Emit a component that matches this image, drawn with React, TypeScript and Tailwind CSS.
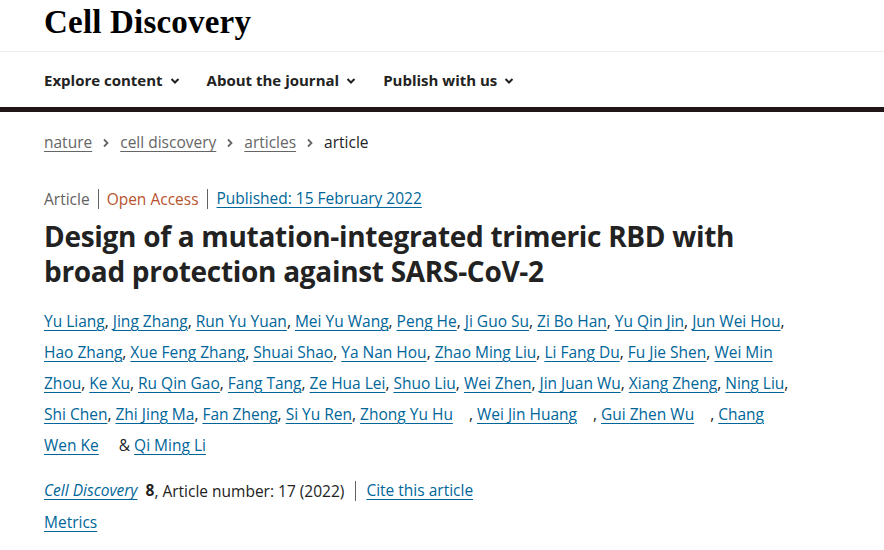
import React from "react";

const sans = { fontFamily: '"Open Sans", "Noto Sans", sans-serif' };

// parts: a name that wraps at the line end is split into two link pieces
type Author = { parts: string[]; gap?: boolean };

const authors: Author[] = [
  { parts: ["Yu Liang"] },
  { parts: ["Jing Zhang"] },
  { parts: ["Run Yu Yuan"] },
  { parts: ["Mei Yu Wang"] },
  { parts: ["Peng He"] },
  { parts: ["Ji Guo Su"] },
  { parts: ["Zi Bo Han"] },
  { parts: ["Yu Qin Jin"] },
  { parts: ["Jun Wei Hou"] },
  { parts: ["Hao Zhang"] },
  { parts: ["Xue Feng Zhang"] },
  { parts: ["Shuai Shao"] },
  { parts: ["Ya Nan Hou"] },
  { parts: ["Zhao Ming Liu"] },
  { parts: ["Li Fang Du"] },
  { parts: ["Fu Jie Shen"] },
  { parts: ["Wei Min", "Zhou"] },
  { parts: ["Ke Xu"] },
  { parts: ["Ru Qin Gao"] },
  { parts: ["Fang Tang"] },
  { parts: ["Ze Hua Lei"] },
  { parts: ["Shuo Liu"] },
  { parts: ["Wei Zhen"] },
  { parts: ["Jin Juan Wu"] },
  { parts: ["Xiang Zheng"] },
  { parts: ["Ning Liu"] },
  { parts: ["Shi Chen"] },
  { parts: ["Zhi Jing Ma"] },
  { parts: ["Fan Zheng"] },
  { parts: ["Si Yu Ren"] },
  { parts: ["Zhong Yu Hu"], gap: true },
  { parts: ["Wei Jin Huang"], gap: true },
  { parts: ["Gui Zhen Wu"], gap: true },
  { parts: ["Chang", "Wen Ke"], gap: true },
];

function Chevron() {
  return (
    <svg width="10" height="10" viewBox="0 0 10 10" className="ml-[7px] mt-[1px]">
      <path d="M1.5 3 L5 6.5 L8.5 3" fill="none" stroke="#222" strokeWidth="2" />
    </svg>
  );
}

function Crumb() {
  return (
    <svg width="8" height="10" viewBox="0 0 8 10" className="mx-[10px]">
      <path d="M2 1.5 L5.5 5 L2 8.5" fill="none" stroke="#666" strokeWidth="1.8" />
    </svg>
  );
}

const link = "text-[#006699] underline underline-offset-[3px]";

export default function App() {
  return (
    <div className="w-[884px] h-[550px] overflow-hidden bg-white text-[#222]" style={sans}>
      <header className="h-[52px] border-b border-[#eeeeee] px-[44px] flex items-center">
        <span
          className="text-[33px] font-bold leading-none tracking-[0.2px] text-black -mt-[6px]"
          style={{ fontFamily: '"Liberation Serif", serif' }}
        >
          Cell Discovery
        </span>
      </header>

      <nav className="h-[55px] px-[44px] flex items-center gap-[27px] text-[15px] font-bold pt-[1px]">
        {["Explore content", "About the journal", "Publish with us"].map((t) => (
          <span key={t} className="flex items-center">
            {t}
            <Chevron />
          </span>
        ))}
      </nav>
      <div className="h-[5px] bg-[#211617]" />

      <main className="px-[44px] pt-[19px] w-[840px] text-[15.5px]">
        <div className="flex items-center h-[24px] text-[#666]">
          <span className="underline underline-offset-[3px]">nature</span>
          <Crumb />
          <span className="underline underline-offset-[3px]">cell discovery</span>
          <Crumb />
          <span className="underline underline-offset-[3px]">articles</span>
          <Crumb />
          <span className="text-[#222]">article</span>
        </div>

        <div className="mt-[32px] flex items-center h-[24px]">
          <span className="text-[#626262] pr-[8px] border-r border-[#626262] leading-[20px]">Article</span>
          <span className="text-[#b8532f] px-[8px] border-r border-[#626262] leading-[20px]">Open Access</span>
          <span className={`pl-[9px] ${link}`}>Published: 15 February 2022</span>
        </div>

        <h1 className="mt-[8px] text-[28px] font-bold leading-[35px] tracking-[-0.3px] text-[#222] w-[760px]">
          Design of a mutation-integrated trimeric RBD with broad protection against SARS-CoV-2
        </h1>

        <p className="mt-[17px] leading-[31px] w-[756px]">
          {authors.map((a, i) => (
            <React.Fragment key={a.parts.join(" ")}>
              {a.parts.map((p, j) => (
                <React.Fragment key={p}>
                  {j > 0 ? " " : null}
                  <span className={link}>{p}</span>
                </React.Fragment>
              ))}
              {a.gap && <span className="inline-block w-[16px]" />}
              {i < authors.length - 1 ? <span className="text-[#222]">, </span> : null}
            </React.Fragment>
          ))}
          <span className="text-[#222]"> &amp; </span>
          <span className={link}>Qi Ming Li</span>
        </p>

        <div className="mt-[18px] flex items-center h-[24px]">
          <span className={`italic ${link}`}>Cell Discovery</span>
          <span className="ml-[8px] font-bold">8</span>
          <span className="pr-[11px] border-r border-[#626262] leading-[20px]">, Article number: 17 (2022)</span>
          <span className={`ml-[10px] ${link}`}>Cite this article</span>
        </div>

        <div className="mt-[8px] h-[24px]">
          <span className={link}>Metrics</span>
        </div>
      </main>
    </div>
  );
}
